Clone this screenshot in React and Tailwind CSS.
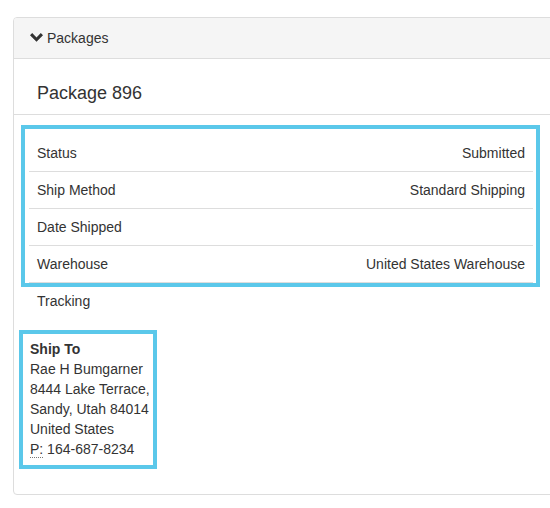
import React from "react";

const rows = [
  ["Status", "Submitted"],
  ["Ship Method", "Standard Shipping"],
  ["Date Shipped", ""],
  ["Warehouse", "United States Warehouse"],
];

export default function App() {
  return (
    <div className="w-[550px] h-[508px] overflow-hidden bg-white font-['Liberation_Sans',Arial,sans-serif] text-[14px] leading-[20px] text-[#333]">
      <div className="pt-[17px] pl-[13px]">
        <div className="w-[600px] border border-[#ddd] rounded-[4px] overflow-hidden">
          <div className="h-[41px] bg-[#f5f5f5] border-b border-[#ddd] flex items-center pl-[16px] gap-[4px]">
            <svg width="13" height="9" viewBox="0 0 13 9" className="mt-[-1px]">
              <polygon points="0,2.3 2.2,0.1 6.5,4.4 10.8,0.1 13,2.3 6.5,8.8" fill="#333" />
            </svg>
            <span>Packages</span>
          </div>
          <div className="h-[56px] border-b border-[#ddd] pl-[23px] pt-[24px] text-[18px] leading-[20px]">
            Package 896
          </div>
          <div className="pl-[15px] pt-[20px] pb-[25px]">
            <div className="relative w-[504px]">
              <div className="pointer-events-none absolute left-[-8px] top-[-10px] w-[519px] h-[162px] border-4 border-[#5bc8ea]" />
              {rows.map(([k, v], i) => (
                <div
                  key={k}
                  className={
                    "flex justify-between items-center px-[8px] " +
                    (i === 0 ? "h-[36px]" : "h-[37px] border-t border-[#ddd]")
                  }
                >
                  <span>{k}</span>
                  <span>{v}</span>
                </div>
              ))}
              <div className="h-[37px] flex items-center px-[8px] border-t border-[#ddd]">
                <span>Tracking</span>
              </div>
            </div>
            <div className="mt-[11px] ml-[-10px] inline-block border-4 border-[#5bc8ea] pl-[7px] pr-[3px] pt-[5px] pb-[6px]">
              <div className="font-bold">Ship To</div>
              <div>Rae H Bumgarner</div>
              <div>8444 Lake Terrace,</div>
              <div>Sandy, Utah 84014</div>
              <div>United States</div>
              <div>
                <abbr title="Phone" className="no-underline border-b border-dotted border-[#777] cursor-help">P:</abbr> 164-687-8234
              </div>
            </div>
          </div>
        </div>
      </div>
    </div>
  );
}
